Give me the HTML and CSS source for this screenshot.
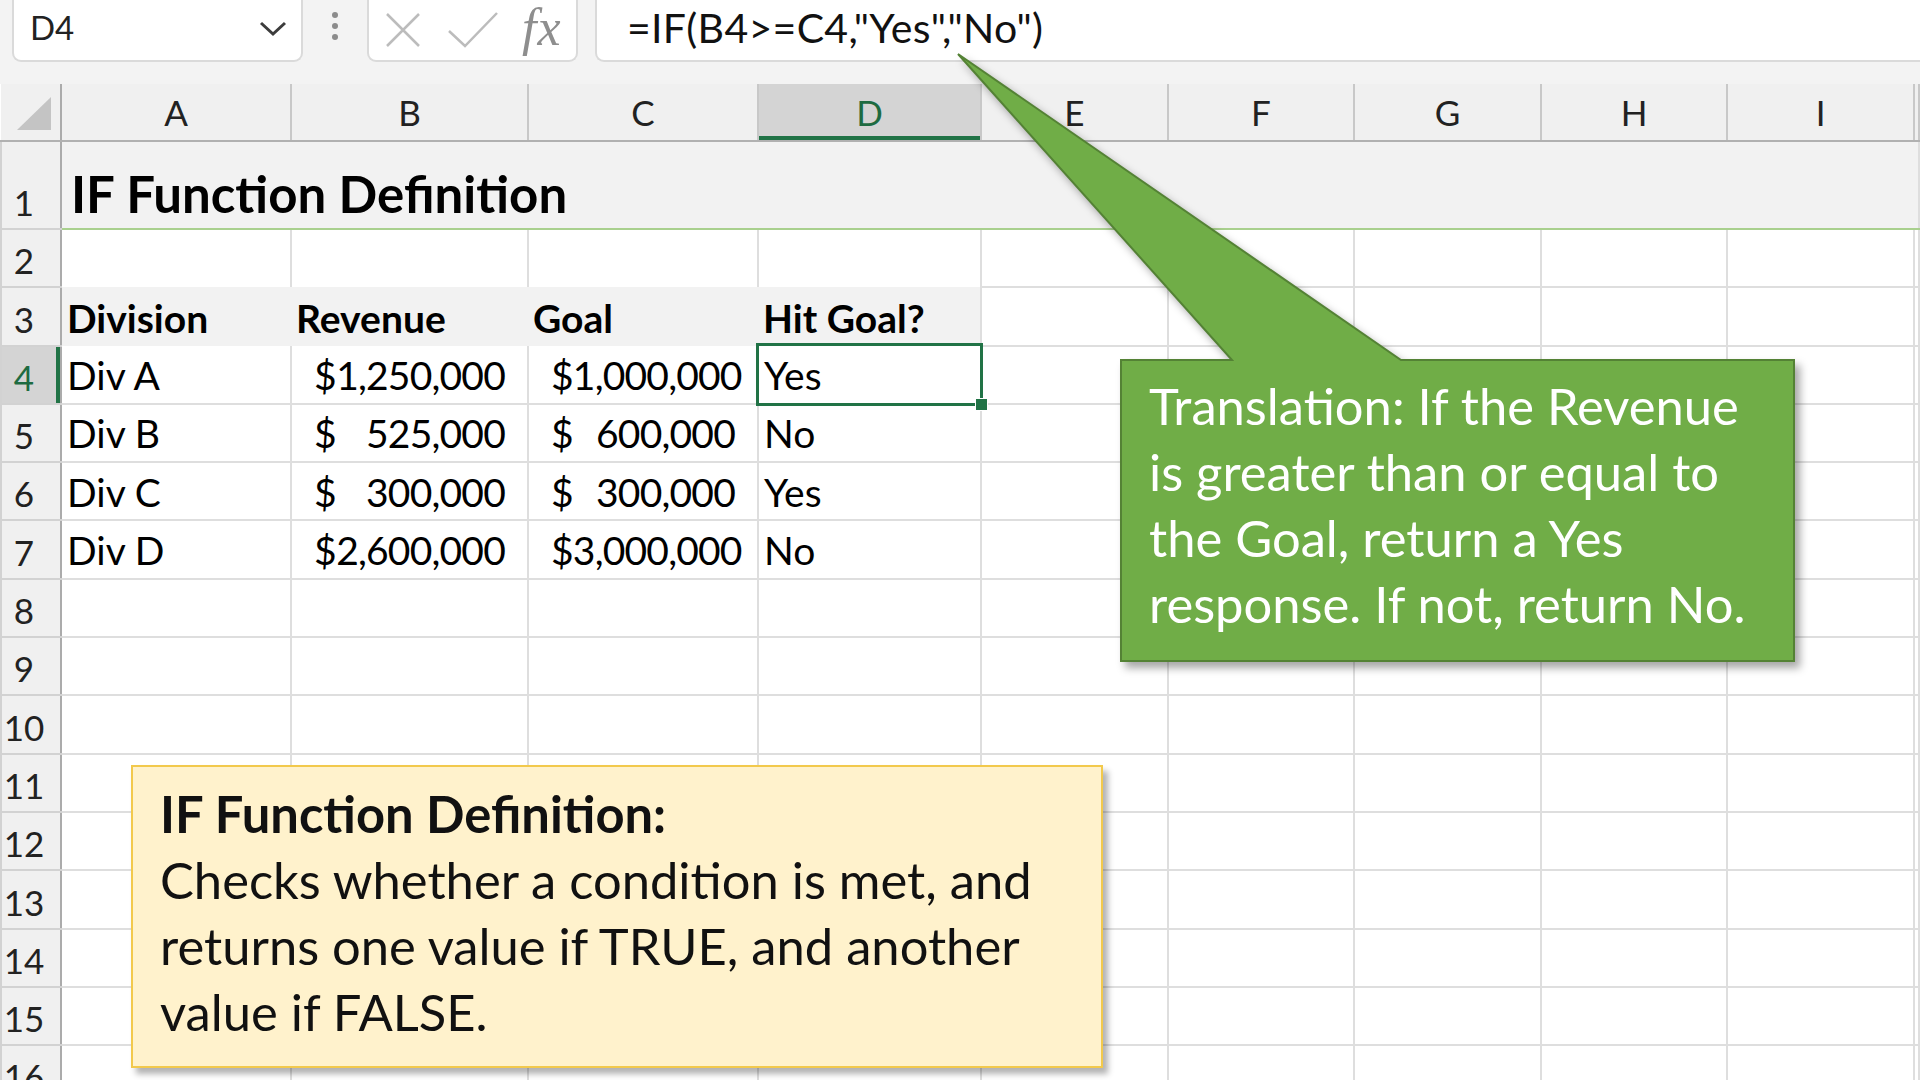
FILE: index.html
```html
<!DOCTYPE html>
<html lang="en">
<head>
    <meta charset="UTF-8">
    <meta name="viewport" content="width=device-width, initial-scale=1.0">
    <title>IF Function Definition</title>
    <link rel="stylesheet" href="styles.css">
</head>
<body>

<div class="formula-bar">
    <div class="name-box">
        <span>D4</span>
        <svg class="chevron" width="28" height="16" viewBox="0 0 28 16">
            <path d="M2 2 L14 13 L26 2" fill="none" stroke="#3c3c3c" stroke-width="3"/>
        </svg>
    </div>
    <div class="grip"><i></i><i></i><i></i></div>
    <div class="fx-box">
        <svg class="icon-x" width="36" height="36" viewBox="0 0 36 36">
            <path d="M2 2 L34 34 M34 2 L2 34" stroke="#bcbcbc" stroke-width="2.5"/>
        </svg>
        <svg class="icon-check" width="50" height="36" viewBox="0 0 50 36">
            <path d="M1 19 L17 34 L49 1" fill="none" stroke="#bcbcbc" stroke-width="2.5"/>
        </svg>
        <span class="fx">fx</span>
    </div>
    <div class="formula">=IF(B4&gt;=C4,"Yes","No")</div>
</div>

<table class="sheet">
    <colgroup>
        <col class="w-rh">
        <col class="w-a">
        <col class="w-b">
        <col class="w-c">
        <col class="w-d">
        <col class="w-std">
        <col class="w-std">
        <col class="w-std">
        <col class="w-std">
        <col class="w-std">
        <col>
    </colgroup>
    <tr class="col-head">
        <th class="corner"></th>
        <th>A</th><th>B</th><th>C</th><th class="active">D</th>
        <th>E</th><th>F</th><th>G</th><th>H</th><th>I</th><th></th>
    </tr>
    <tr class="r1">
        <th>1</th>
        <td colspan="10" class="title">IF Function Definition</td>
    </tr>
    <tr>
        <th>2</th>
        <td></td><td></td><td></td><td></td><td></td><td></td><td></td><td></td><td></td><td></td>
    </tr>
    <tr>
        <th>3</th>
        <td class="lbl">Division</td>
        <td class="lbl">Revenue</td>
        <td class="lbl">Goal</td>
        <td class="lbl last">Hit Goal?</td>
        <td></td><td></td><td></td><td></td><td></td><td></td>
    </tr>
    <tr>
        <th class="active">4</th>
        <td>Div A</td>
        <td><div class="acct"><span>$</span><span>1,250,000</span></div></td>
        <td><div class="acct"><span>$</span><span>1,000,000</span></div></td>
        <td class="sel">Yes</td>
        <td></td><td></td><td></td><td></td><td></td><td></td>
    </tr>
    <tr>
        <th>5</th>
        <td>Div B</td>
        <td><div class="acct"><span>$</span><span>525,000</span></div></td>
        <td><div class="acct"><span>$</span><span>600,000</span></div></td>
        <td>No</td>
        <td></td><td></td><td></td><td></td><td></td><td></td>
    </tr>
    <tr>
        <th>6</th>
        <td>Div C</td>
        <td><div class="acct"><span>$</span><span>300,000</span></div></td>
        <td><div class="acct"><span>$</span><span>300,000</span></div></td>
        <td>Yes</td>
        <td></td><td></td><td></td><td></td><td></td><td></td>
    </tr>
    <tr>
        <th>7</th>
        <td>Div D</td>
        <td><div class="acct"><span>$</span><span>2,600,000</span></div></td>
        <td><div class="acct"><span>$</span><span>3,000,000</span></div></td>
        <td>No</td>
        <td></td><td></td><td></td><td></td><td></td><td></td>
    </tr>
    <tr>
        <th>8</th>
        <td></td><td></td><td></td><td></td><td></td><td></td><td></td><td></td><td></td><td></td>
    </tr>
    <tr>
        <th>9</th>
        <td></td><td></td><td></td><td></td><td></td><td></td><td></td><td></td><td></td><td></td>
    </tr>
    <tr>
        <th>10</th>
        <td></td><td></td><td></td><td></td><td></td><td></td><td></td><td></td><td></td><td></td>
    </tr>
    <tr>
        <th>11</th>
        <td></td><td></td><td></td><td></td><td></td><td></td><td></td><td></td><td></td><td></td>
    </tr>
    <tr>
        <th>12</th>
        <td></td><td></td><td></td><td></td><td></td><td></td><td></td><td></td><td></td><td></td>
    </tr>
    <tr>
        <th>13</th>
        <td></td><td></td><td></td><td></td><td></td><td></td><td></td><td></td><td></td><td></td>
    </tr>
    <tr>
        <th>14</th>
        <td></td><td></td><td></td><td></td><td></td><td></td><td></td><td></td><td></td><td></td>
    </tr>
    <tr>
        <th>15</th>
        <td></td><td></td><td></td><td></td><td></td><td></td><td></td><td></td><td></td><td></td>
    </tr>
    <tr>
        <th>16</th>
        <td></td><td></td><td></td><td></td><td></td><td></td><td></td><td></td><td></td><td></td>
    </tr>
</table>

<!-- callout shape: box + pointer to the formula bar -->
<svg class="callout-shape" width="1920" height="1080" viewBox="0 0 1920 1080">
    <path d="M958 54 L1232 360 L1121 360 L1121 661 L1794 661 L1794 360 L1401 360 Z"
          fill="#70ad47" stroke="#548235" stroke-width="2" stroke-linejoin="miter"/>
</svg>

<div class="callout-green">
    Translation: If the Revenue<br>
    is greater than or equal to<br>
    the Goal, return a Yes<br>
    response. If not, return No.
</div>

<div class="callout-yellow">
    <b>IF Function Definition:</b><br>
    Checks whether a condition is met, and<br>
    returns one value if TRUE, and another<br>
    value if FALSE.
</div>

</body>
</html>
```

FILE: styles.css
```css
body {
    margin: 0;
    width: 1920px;
    height: 1080px;
    overflow: hidden;
    position: relative;
    background-color: #fff;
    font-family: Lato, "Liberation Sans", sans-serif;
    color: #000;
}

/* ---- formula bar ---- */

.formula-bar {
    height: 84px;
    background-color: #f3f3f3;
    display: flex;
    align-items: flex-start;
    padding-left: 12px;
    box-sizing: border-box;
}

.name-box, .fx-box, .formula {
    height: 62px;
    padding-bottom: 6px;
    background-color: #fff;
    border: 2px solid #dadada;
    border-top: none;
    border-radius: 0 0 9px 9px;
    box-sizing: border-box;
    display: flex;
    align-items: center;
}

.name-box {
    width: 291px;
    padding-left: 16px;
    padding-right: 14px;
    justify-content: space-between;
    font-size: 33px;
    color: #222;
}

.chevron {
    position: relative;
    top: 2px;
}

.grip {
    width: 64px;
    display: flex;
    flex-direction: column;
    align-items: center;
    gap: 5px;
    padding-top: 12px;
}

.grip i {
    width: 6px;
    height: 6px;
    border-radius: 50%;
    background-color: #8c8c8c;
}

.fx-box {
    width: 211px;
    padding-left: 16px;
    padding-bottom: 0;
}

.icon-check {
    margin-left: 27px;
}

.fx {
    margin-left: 24px;
    font-family: "Liberation Serif", serif;
    font-style: italic;
    font-size: 52px;
    line-height: 52px;
    letter-spacing: 1px;
    color: #8e8e8e;
    position: relative;
    top: -2px;
}

.formula {
    flex: 1;
    margin-left: 17px;
    padding-left: 30px;
    border-right: none;
    border-radius: 0 0 0 9px;
    font-size: 41px;
    letter-spacing: 0.3px;
    color: #111;
}

/* ---- grid ---- */

.sheet {
    border-collapse: collapse;
    table-layout: fixed;
    width: 1920px;
}

.w-rh { width: 60px; }
.w-a { width: 230px; }
.w-b { width: 237px; }
.w-c { width: 230px; }
.w-d { width: 223px; }
.w-std { width: 186.6px; }

.sheet tr {
    height: 58.3px;
}

.sheet td {
    padding: 0 8px 4px 5px;
    border: 2px solid #dedede;
    vertical-align: bottom;
    font-size: 39px;
    line-height: 1.2;
    white-space: nowrap;
    overflow: hidden;
}

.sheet th {
    padding: 0 14px 5px 0;
    background-color: #f0f0f0;
    border: 2px solid #d2d2d2;
    border-right-color: #ababab;
    vertical-align: bottom;
    font-size: 35px;
    font-weight: 400;
    line-height: 1.2;
    color: #222;
}

.sheet tr.col-head {
    height: 57px;
}

.col-head th {
    padding: 0;
    vertical-align: middle;
    border: none;
    border-right: 2px solid #c8c8c8;
    border-bottom: 2px solid #b1b1b1;
}

.col-head th.corner {
    position: relative;
    border-right: 2px solid #ababab;
}

.corner::after {
    content: '';
    position: absolute;
    right: 9px;
    bottom: 10px;
    border-left: 34px solid transparent;
    border-bottom: 33px solid #c4c4c4;
}

.sheet th.active {
    background-color: #d4d4d4;
    color: #1e6b41;
}

.col-head th.active {
    box-shadow: inset 0 -4px 0 #217346;
}

.sheet tr > th.active:first-child {
    box-shadow: inset -4px 0 0 #217346;
}

.sheet tr.r1 {
    height: 88px;
}

.sheet td.title {
    background-color: #f2f2f2;
    border-bottom: 2px solid #a9d08e;
    font-size: 51px;
    font-weight: 700;
    line-height: 66px;
    padding: 0 0 1px 9px;
}

.sheet td.lbl {
    background-color: #f2f2f2;
    font-weight: 700;
    border-top-style: hidden;
    border-bottom-style: hidden;
    border-right-style: hidden;
}

.sheet td.lbl.last {
    border-right-style: solid;
}

.acct {
    display: flex;
    justify-content: space-between;
    padding: 0 14px 0 17px;
    letter-spacing: -0.8px;
}

.sheet td.sel {
    position: relative;
    overflow: visible;
}

.sel::after {
    content: '';
    position: absolute;
    top: -3px;
    left: -3px;
    right: -3px;
    bottom: -3px;
    border: 3px solid #217346;
}

.sel::before {
    content: '';
    position: absolute;
    right: -8px;
    bottom: -8px;
    width: 11px;
    height: 11px;
    background-color: #217346;
    border: 1px solid #fff;
    z-index: 1;
}

/* ---- callouts ---- */

.callout-shape {
    position: absolute;
    top: 0;
    left: 0;
    pointer-events: none;
    filter: drop-shadow(5px 6px 4px rgba(0, 0, 0, 0.35));
}

.callout-green, .callout-yellow {
    position: absolute;
    box-sizing: border-box;
    font-size: 50.7px;
    line-height: 66px;
    white-space: nowrap;
}

.callout-green {
    left: 1120px;
    top: 359px;
    width: 675px;
    height: 303px;
    padding: 14px 0 0 29px;
    color: #fff;
}

.callout-yellow {
    left: 131px;
    top: 765px;
    width: 972px;
    height: 303px;
    padding: 14px 0 0 27px;
    background-color: #fff2cc;
    border: 2px solid #f2c94c;
    box-shadow: 5px 6px 6px rgba(0, 0, 0, 0.3);
    color: #111;
}
```
